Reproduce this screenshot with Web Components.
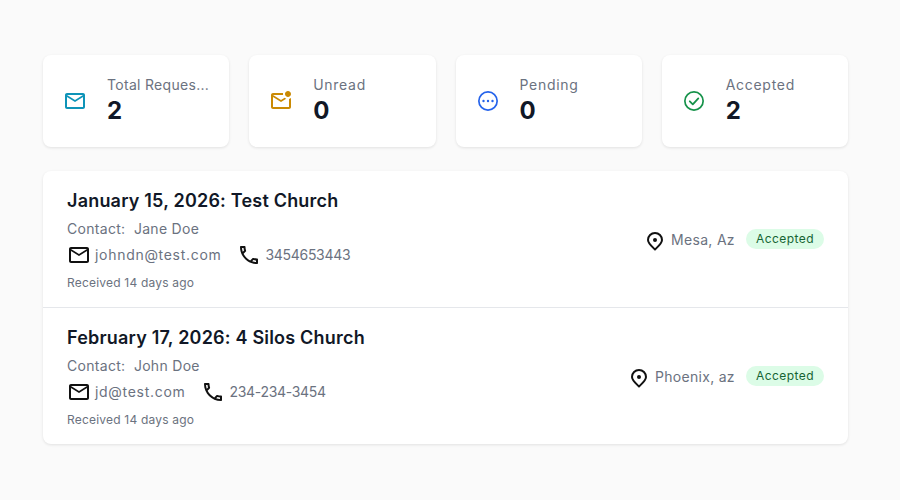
<!DOCTYPE html>
<html>
<head>
<meta charset="utf-8">
<style>
  html, body { margin: 0; padding: 0; }
  body { background: #fafafa; font-family: "Inter", "Liberation Sans", sans-serif; width: 900px; height: 500px; overflow: hidden; }
</style>
</head>
<body>
<requests-page>
  <stat-card slot="stats" label="Total Reques..." tight value="2" icon="mail" color="#0e94b8"></stat-card>
  <stat-card slot="stats" label="Unread" value="0" icon="unread" color="#ca8a04"></stat-card>
  <stat-card slot="stats" label="Pending" value="0" icon="pending" color="#2563eb"></stat-card>
  <stat-card slot="stats" label="Accepted" value="2" icon="check" color="#16924a"></stat-card>
  <request-row slot="rows" heading="January 15, 2026: Test Church" contact="Jane Doe" email="johndn@test.com" phone="3454653443" received="Received 14 days ago" place="Mesa, Az" status="Accepted"></request-row>
  <request-row slot="rows" heading="February 17, 2026: 4 Silos Church" contact="John Doe" email="jd@test.com" phone="234-234-3454" received="Received 14 days ago" place="Phoenix, az" status="Accepted"></request-row>
</requests-page>

<script>
const RING = `<circle cx="12" cy="12" r="9.150" fill="none" stroke="currentColor" stroke-width="1.700"/>`;
const ICONS = {
  mail: `<path d="M20 4H4c-1.100 0-1.990.9-1.990 2L2 18c0 1.100.9 2 2 2h16c1.100 0 2-.9 2-2V6c0-1.100-.9-2-2-2zm0 14H4V8l8 5 8-5v10zm-8-7L4 6h16l-8 5z"/>`,
  unread: `<path d="M22 8.980V18c0 1.100-.9 2-2 2H4c-1.100 0-2-.9-2-2V6c0-1.100.9-2 2-2h10.100c-.06.320-.1.660-.1 1 0 .340.04.680.1 1H4l8 5 3.660-2.290c.44.40.96.710 1.530.920L12 13 4 8v10h16V9.900c.750-.150 1.440-.490 2-.920zM16 5c0 1.660 1.340 3 3 3s3-1.340 3-3-1.340-3-3-3-3 1.340-3 3z"/>`,
  pending: `${RING}<circle cx="7.500" cy="12" r="1.200"/><circle cx="12" cy="12" r="1.200"/><circle cx="16.500" cy="12" r="1.200"/>`,
  check: `${RING}<path d="M7.800 12.300l3 3 5.500-5.900" fill="none" stroke="currentColor" stroke-width="1.800" stroke-linecap="round" stroke-linejoin="round"/>`,
  phone: `<path d="M6.540 5c.06.890.210 1.760.450 2.590l-1.200 1.200c-.410-1.200-.670-2.470-.760-3.790h1.510m9.860 12.020c.850.240 1.720.390 2.600.450v1.490c-1.320-.090-2.590-.350-3.800-.750l1.200-1.190M7.500 3H4c-.550 0-1 .450-1 1 0 9.390 7.610 17 17 17 .550 0 1-.450 1-1v-3.490c0-.550-.45-1-1-1-1.240 0-2.450-.2-3.570-.570-.1-.040-.210-.050-.310-.050-.260 0-.510.1-.710.290l-2.200 2.200c-2.830-1.450-5.150-3.760-6.590-6.590l2.200-2.200c.280-.280.360-.670.250-1.020C8.700 6.450 8.500 5.250 8.500 4c0-.550-.45-1-1-1z"/>`,
  pin: `<path d="M12 20.500c-2-2-7-6-7-9.500a7 7 0 0 1 14 0c0 3.500-5 7.500-7 9.500z" fill="none" stroke="currentColor" stroke-width="2" stroke-linejoin="round"/><circle cx="12" cy="11" r="2"/>`
};

class AppIcon extends HTMLElement {
  connectedCallback() {
    this.attachShadow({ mode: "open" }).innerHTML = `
      <style>
        :host { display: block; flex: none; width: 24px; height: 24px; }
        svg { display: block; }
      </style>
      <svg width="24" height="24" viewBox="0 0 24 24" fill="currentColor">${ICONS[this.getAttribute("name")]}</svg>
    `;
  }
}
customElements.define("app-icon", AppIcon);

class StatCard extends HTMLElement {
  connectedCallback() {
    this.attachShadow({ mode: "open" }).innerHTML = `
      <style>
        :host {
          display: flex;
          align-items: center;
          gap: 20px;
          height: 92px;
          box-sizing: border-box;
          padding: 0 20px;
          background: #fff;
          border-radius: 8px;
          box-shadow: 0 1px 3px rgba(0, 0, 0, 0.1);
          min-width: 0;
        }
        .text { min-width: 0; flex: 1; }
        .label {
          font-size: 14px;
          line-height: 20px;
          letter-spacing: 0.7px;
          color: #6b7280;
          white-space: nowrap;
        }
        :host([tight]) .label { letter-spacing: 0.3px; }
        .value {
          font-size: 24px;
          line-height: 32px;
          font-weight: 700;
          color: #111827;
        }
      </style>
      <app-icon name="${this.getAttribute("icon")}" style="color:${this.getAttribute("color")}"></app-icon>
      <div class="text">
        <div class="label">${this.getAttribute("label")}</div>
        <div class="value">${this.getAttribute("value")}</div>
      </div>
    `;
  }
}
customElements.define("stat-card", StatCard);

class RequestRow extends HTMLElement {
  connectedCallback() {
    const a = (n) => this.getAttribute(n);
    this.attachShadow({ mode: "open" }).innerHTML = `
      <style>
        :host {
          display: flex;
          align-items: center;
          justify-content: space-between;
          height: 136px;
          box-sizing: border-box;
          padding: 0 24px;
        }
        :host(:not(:last-child)) { height: 137px; border-bottom: 1px solid #e5e7eb; }
        h3 {
          margin: 0 0 4px;
          font-size: 18px;
          line-height: 28px;
          font-weight: 600;
          letter-spacing: 0.2px;
          color: #111827;
        }
        .muted { font-size: 14px; line-height: 20px; letter-spacing: 0.3px; color: #6b7280; }
        .links { display: flex; gap: 16px; margin-top: 4px; }
        .link { display: flex; align-items: center; gap: 4px; height: 24px; }
        .link app-icon { color: #111; }
        .email { letter-spacing: 0.7px; }
        .phone { letter-spacing: -0.3px; }
        .received { font-size: 12px; line-height: 16px; letter-spacing: 0.2px; color: #6b7280; margin-top: 8px; }
        .side { display: flex; align-items: center; gap: 11px; }
        .place { display: flex; align-items: center; gap: 4px; margin-top: 2px; }
        .place app-icon { color: #111; margin-top: 2px; }
        .badge {
          font-size: 12px;
          line-height: 20px;
          letter-spacing: 0.45px;
          padding: 0 10px;
          border-radius: 10px;
          background: #dcfce7;
          color: #166534;
        }
      </style>
      <div>
        <h3>${a("heading")}</h3>
        <div class="muted">Contact:&nbsp; ${a("contact")}</div>
        <div class="links">
          <div class="link muted"><app-icon name="mail"></app-icon><span class="email">${a("email")}</span></div>
          <div class="link muted"><app-icon name="phone"></app-icon><span class="phone">${a("phone")}</span></div>
        </div>
        <div class="received">${a("received")}</div>
      </div>
      <div class="side">
        <div class="place muted"><app-icon name="pin"></app-icon>${a("place")}</div>
        <div class="badge">${a("status")}</div>
      </div>
    `;
  }
}
customElements.define("request-row", RequestRow);

class RequestsPage extends HTMLElement {
  connectedCallback() {
    this.attachShadow({ mode: "open" }).innerHTML = `
      <style>
        :host { display: block; padding: 55px 52px 0 43px; }
        .stats { display: grid; grid-template-columns: repeat(4, minmax(0, 1fr)); gap: 20px; }
        .list {
          display: block;
          margin-top: 24px;
          background: #fff;
          border-radius: 8px;
          box-shadow: 0 1px 3px rgba(0, 0, 0, 0.1);
        }
      </style>
      <div class="stats"><slot name="stats"></slot></div>
      <div class="list"><slot name="rows"></slot></div>
    `;
  }
}
customElements.define("requests-page", RequestsPage);
</script>
</body>
</html>
